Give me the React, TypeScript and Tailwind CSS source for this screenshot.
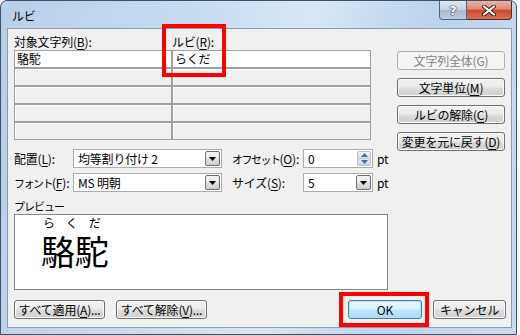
import type { ReactNode } from 'react';

const ui = "font-['Noto_Sans_CJK_JP',sans-serif] text-[12px] leading-[15px] text-black whitespace-nowrap tracking-[-0.2px]";

function K({ c }: { c: string }) {
  return <span className="underline underline-offset-[2px]">{c}</span>;
}

function Btn({ children, className = '', def = false, disabled = false }: { children: ReactNode; className?: string; def?: boolean; disabled?: boolean }) {
  let look = 'border-[#707070] bg-[linear-gradient(#f2f2f2_0%,#ebebeb_48%,#dddddd_52%,#cfcfcf_100%)] shadow-[inset_0_0_0_1px_#fbfbfb] text-black';
  if (def) look = 'border-[#3c7fb1] bg-[linear-gradient(#eaf6fd_0%,#d9f0fc_48%,#bee6fd_52%,#a7d9f5_100%)] shadow-[inset_0_0_0_1px_#b5e3fb] text-black';
  if (disabled) look = 'border-[#adb2b5] bg-[#f4f4f4] text-[#838383]';
  return (
    <div className={`flex h-[19px] shrink-0 items-center justify-center rounded-[3px] border ${look} ${className}`}>
      {children}
    </div>
  );
}

function Arrow() {
  return (
    <svg width="7" height="4" viewBox="0 0 7 4">
      <path d="M0 0h7L3.5 4z" fill="#000" />
    </svg>
  );
}

function Combo({ value, className }: { value: string; className: string }) {
  return (
    <div className={`flex h-[19px] shrink-0 items-stretch border border-[#abadb3] bg-white ${className}`}>
      <div className="flex flex-1 items-center pl-[4px]">{value}</div>
      <div className="m-[1px] flex w-[15px] items-center justify-center rounded-[2px] border border-[#707070] bg-[linear-gradient(#f2f2f2,#ebebeb_48%,#dddddd_52%,#cfcfcf)]">
        <Arrow />
      </div>
    </div>
  );
}

function Spin() {
  return (
    <div className="flex h-[19px] w-[70px] shrink-0 items-stretch border border-[#abadb3] bg-white">
      <div className="flex flex-1 items-center pl-[4px]">0</div>
      <div className="m-[1px] flex w-[14px] flex-col">
        <div className="flex flex-1 items-center justify-center rounded-t-[2px] border border-[#b5c4d6] bg-[linear-gradient(#eef4fa,#d5e2ef)]">
          <svg width="7" height="4" viewBox="0 0 7 4"><path d="M0 4h7L3.5 0z" fill="#4d6b91" /></svg>
        </div>
        <div className="flex flex-1 items-center justify-center rounded-b-[2px] border border-t-0 border-[#b5c4d6] bg-[linear-gradient(#e3edf7,#c9d9ea)]">
          <svg width="7" height="4" viewBox="0 0 7 4"><path d="M0 0h7L3.5 4z" fill="#4d6b91" /></svg>
        </div>
      </div>
    </div>
  );
}

function Row({ left, right, first = false }: { left?: string; right?: string; first?: boolean }) {
  const cell = first ? 'bg-white' : 'bg-[#f0f0f0] border-t border-l border-white';
  return (
    <>
      <div className={`h-[16px] pl-[2px] leading-[16px] ${cell}`}>{left}</div>
      <div className={`h-[16px] pl-[2px] leading-[16px] ${cell}`}>{right}</div>
    </>
  );
}

export default function App() {
  return (
    <div className={`relative h-[335px] w-[520px] overflow-hidden bg-white ${ui}`}>
      <div className="flex h-[335px] w-[517px] flex-col rounded-t-[7px] border border-[#404f63] bg-[linear-gradient(100deg,#b8cfe8_0%,#c9ddf1_35%,#d8e7f6_55%,#bcd4ec_75%,#c6dbef_100%)]">
        <div className="flex h-[27px] shrink-0 items-start justify-between">
          <div className="pl-[11px] pt-[7px] text-[12px]">ルビ</div>
          <div className="mr-[4px] flex">
            <div className="flex h-[19px] w-[28px] items-center justify-center rounded-bl-[4px] border border-t-0 border-[#53647a] bg-[linear-gradient(#dde7f1_0%,#c4d3e2_50%,#a8bbd0_52%,#b9cbde_100%)]">
              <span className="font-['DejaVu_Sans',sans-serif] text-[13px] font-bold leading-none text-white [text-shadow:0_0_1px_#1d2c3e,0_0_1px_#1d2c3e,0_0_1px_#1d2c3e]">?</span>
            </div>
            <div className="flex h-[19px] w-[45px] items-center justify-center rounded-br-[4px] border border-l-0 border-t-0 border-[#5a2b23] bg-[linear-gradient(#eab4a6_0%,#de8a74_45%,#c94a30_52%,#d8704f_100%)]">
              <svg width="14" height="11" viewBox="0 0 14 11">
                <path d="M2 1.5l10 8M12 1.5l-10 8" stroke="#3b1a14" strokeWidth="4" strokeLinecap="round" />
                <path d="M2 1.5l10 8M12 1.5l-10 8" stroke="#fff" strokeWidth="2.2" strokeLinecap="round" />
              </svg>
            </div>
          </div>
        </div>

        <div className="ml-[6px] flex h-[300px] w-[505px] shrink-0 flex-col border border-[#8a9bb0] bg-[#f0f0f0] pl-[6px] pr-[5px]">
          <div className="flex h-[120px] shrink-0 pt-[5px]">
            <div className="flex w-[357px] flex-col">
              <div className="flex h-[16px]">
                <div className="w-[158px]">対象文字列(<K c="B" />):</div>
                <div>ルビ(<K c="R" />):</div>
              </div>
              <div className="grid grid-cols-[156px_1fr] gap-[2px] border border-[#a0a0a0] bg-[#a0a0a0]">
                <Row left="駱駝" right="らくだ" first />
                <Row />
                <Row />
                <Row />
                <Row />
              </div>
            </div>
            <div className="ml-[26px] flex flex-col gap-[8px] pt-[17px]">
              <Btn className="w-[108px]" disabled>文字列全体(G)</Btn>
              <Btn className="w-[108px]">文字単位(<K c="M" />)</Btn>
              <Btn className="w-[108px]">ルビの解除(<K c="C" />)</Btn>
              <Btn className="w-[108px]">変更を元に戻す(<K c="D" />)</Btn>
            </div>
          </div>

          <div className="flex h-[19px] items-center">
            <div className="w-[59px] shrink-0">配置(<K c="L" />):</div>
            <Combo value="均等割り付け 2" className="w-[149px]" />
            <div className="ml-[10px] w-[71px] shrink-0"><span className="text-[11px] tracking-[-1.5px]">オフセット</span>(<K c="O" />):</div>
            <Spin />
            <div className="ml-[4px]">pt</div>
          </div>
          <div className="mt-[5px] flex h-[19px] items-center">
            <div className="w-[59px] shrink-0"><span className="text-[11px] tracking-[-1.5px]">フォント</span>(<K c="F" />):</div>
            <Combo value="MS 明朝" className="w-[149px]" />
            <div className="ml-[10px] w-[71px] shrink-0">サイズ(<K c="S" />):</div>
            <Combo value="5" className="w-[70px]" />
            <div className="ml-[4px]">pt</div>
          </div>

          <div className="mt-[6px] h-[16px]"><span className="text-[11px] tracking-[-1px]">プレビュー</span></div>
          <div className="h-[76px] w-[374px] border border-[#828790] bg-white pl-[26px] pt-[2px]">
            <div className="flex gap-[11px] pl-[2px] text-[12px] leading-[12px]">
              <span>ら</span>
              <span>く</span>
              <span>だ</span>
            </div>
            <div className="mt-[5px] text-[34px] leading-[34px]">駱駝</div>
          </div>

          <div className="mt-[10px] flex items-center">
            <Btn className="w-[91px]">すべて適用(<K c="A" />)...</Btn>
            <Btn className="ml-[11px] w-[91px]">すべて解除(<K c="V" />)...</Btn>
            <Btn className="ml-auto w-[74px]" def>OK</Btn>
            <Btn className="ml-[11px] w-[73px]">キャンセル</Btn>
          </div>
        </div>
      </div>

      <div className="absolute left-[162px] top-[24px] h-[53px] w-[64px] border-[4px] border-[#ff0000]" />
      <div className="absolute left-[339px] top-[292px] h-[35px] w-[90px] border-[4px] border-[#ff0000]" />
    </div>
  );
}
